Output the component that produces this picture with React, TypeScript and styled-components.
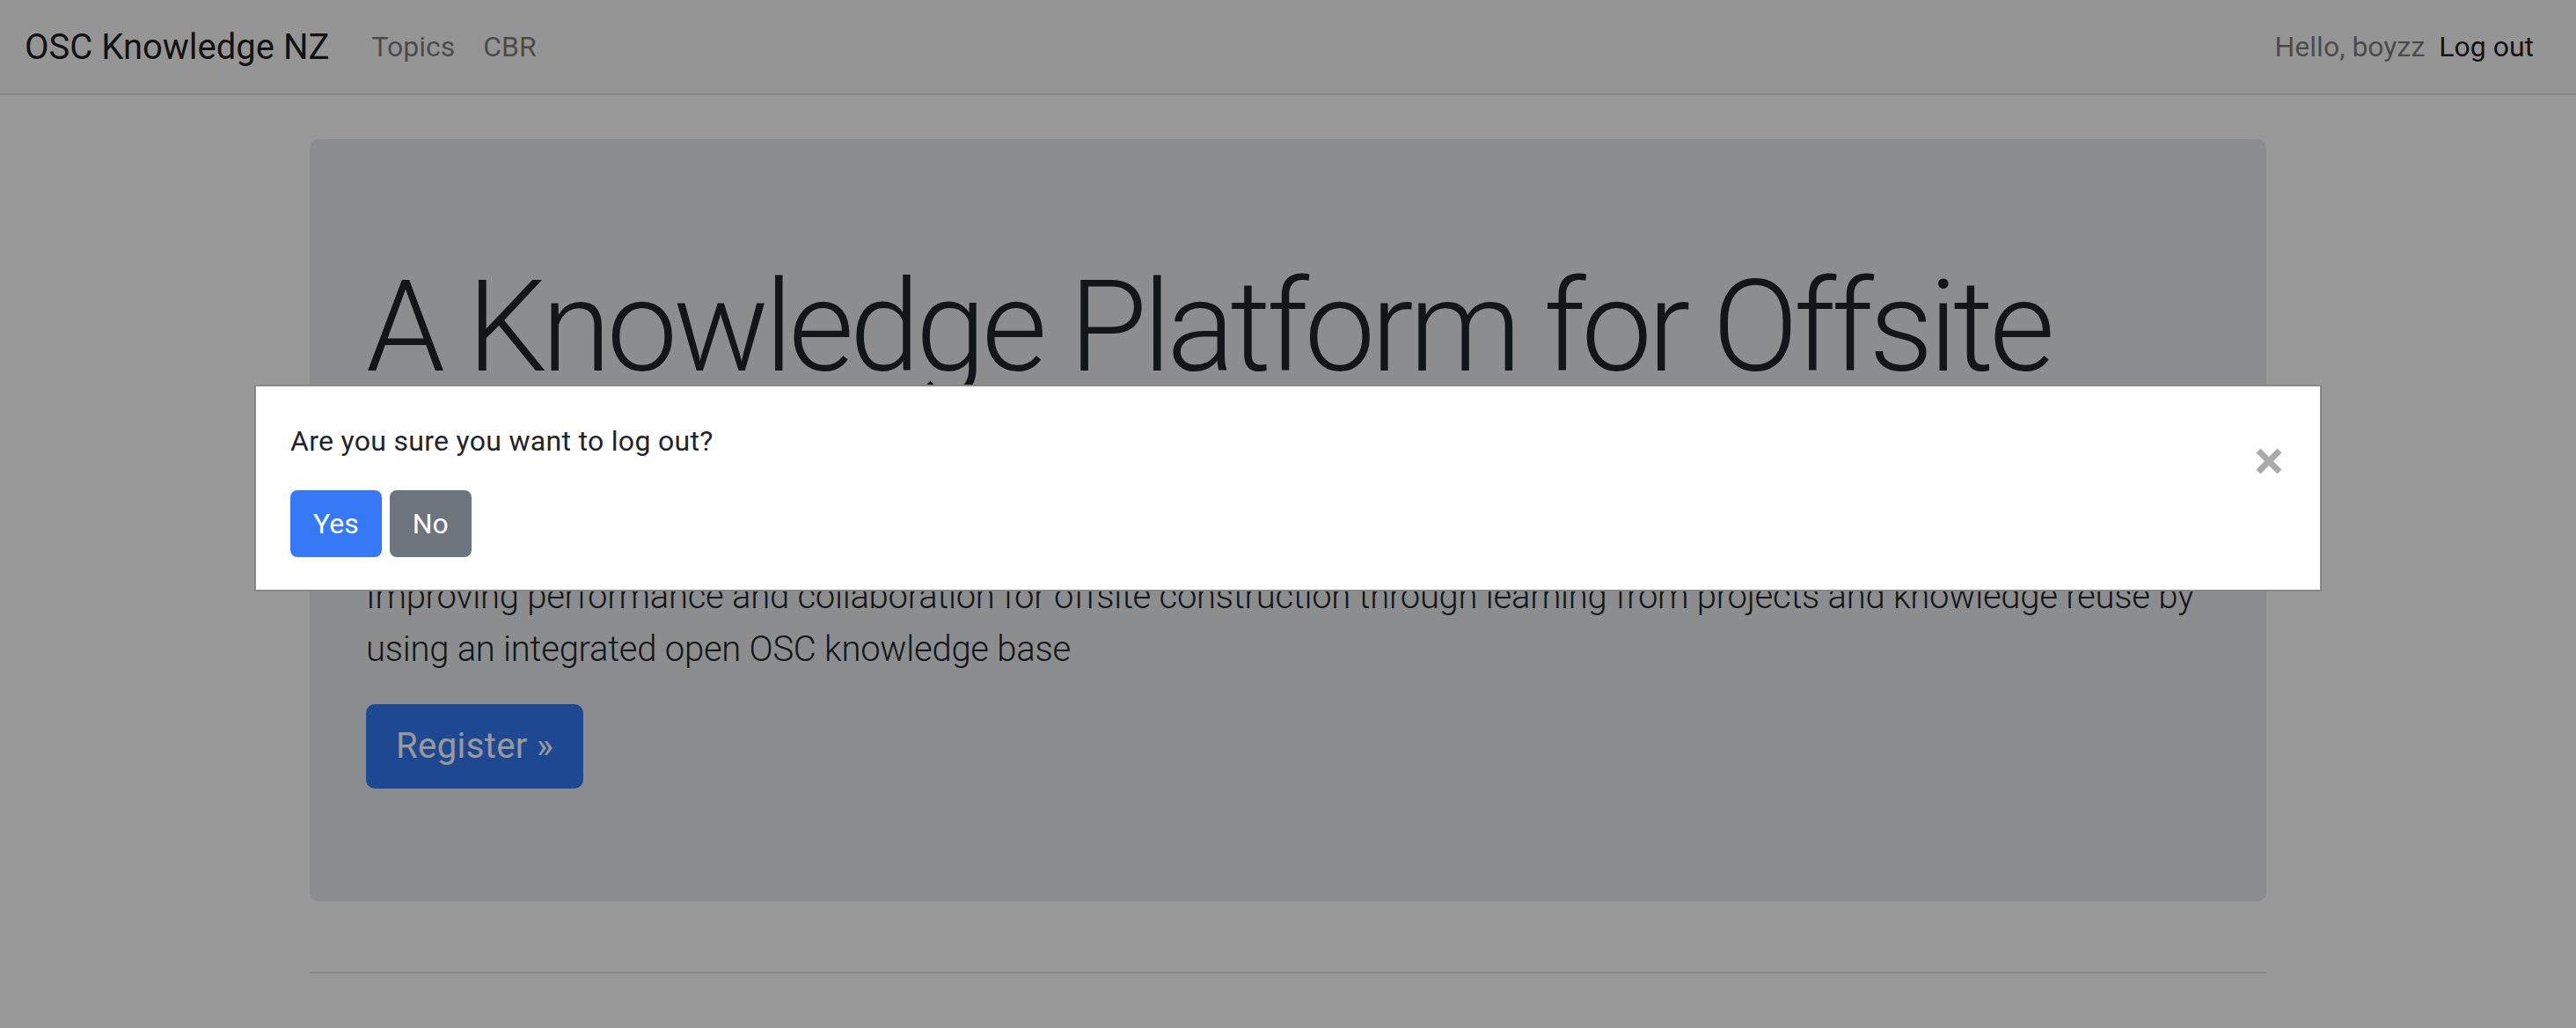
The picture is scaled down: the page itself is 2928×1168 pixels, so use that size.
import styled, { createGlobalStyle } from 'styled-components';

const GlobalStyle = createGlobalStyle`
  html, body {
    margin: 0;
    padding: 0;
    background: #fff;
    font-family: Roboto, 'Liberation Sans', sans-serif;
    color: #212529;
  }
  * {
    box-sizing: border-box;
  }
`;

const Navbar = styled.nav`
  display: flex;
  align-items: center;
  height: 108px;
  padding: 0 32px 0 28px;
  background: #f8f9fa;
  border-bottom: 2px solid #dee2e6;
`;
const Brand = styled.a`
  font-size: 40px;
  color: rgba(0, 0, 0, 0.9);
  text-decoration: none;
  margin-right: 32px;
`;
const NavList = styled.div`
  display: flex;
  align-items: center;
  flex: 1;
`;
const NavLink = styled.a<{ $strong?: boolean }>`
  font-size: 32px;
  padding: 0 16px;
  text-decoration: none;
  color: ${(p) => (p.$strong ? 'rgba(0, 0, 0, 0.9)' : 'rgba(0, 0, 0, 0.5)')};
`;
const NavText = styled.span`
  font-size: 32px;
  color: rgba(0, 0, 0, 0.5);
`;
const Right = styled.div`
  display: flex;
  align-items: center;
`;

const Main = styled.main`
  width: 2224px;
  margin: 0 auto;
  padding-top: 50px;
`;
const Jumbotron = styled.section`
  background: #e9ecef;
  border-radius: 10px;
  padding: 128px 64px;
`;
const Heading = styled.h1`
  margin: 0 0 16px;
  font-size: 144px;
  font-weight: 300;
  line-height: 1.2;
  letter-spacing: -5px;
`;
const Lead = styled.p`
  margin: 0 0 32px;
  font-size: 40px;
  font-weight: 300;
  line-height: 1.5;
  letter-spacing: -0.25px;
`;
const Button = styled.button<{ $variant: 'primary' | 'secondary'; $large?: boolean }>`
  appearance: none;
  border: 2px solid ${(p) => (p.$variant === 'primary' ? '#3579f6' : '#6c757d')};
  background: ${(p) => (p.$variant === 'primary' ? '#3579f6' : '#6c757d')};
  color: #fff;
  font-family: inherit;
  font-size: ${(p) => (p.$large ? '40px' : '32px')};
  letter-spacing: ${(p) => (p.$large ? '0.4px' : '0')};
  line-height: 1.5;
  padding: ${(p) => (p.$large ? '16px 32px' : '12px 24px')};
  border-radius: ${(p) => (p.$large ? '10px' : '8px')};
  cursor: pointer;
`;
const Rule = styled.hr`
  margin: 80px 0 0;
  border: 0;
  border-top: 2px solid rgba(0, 0, 0, 0.1);
`;

const Backdrop = styled.div`
  position: fixed;
  inset: 0;
  background: rgba(0, 0, 0, 0.4);
  display: flex;
  justify-content: center;
  align-items: flex-start;
  padding-top: 437px;
`;
const Dialog = styled.div`
  width: 2350px;
  background: #fff;
  border: 2px solid #888;
  padding: 38px 41px 37px 39px;
  display: flex;
  justify-content: space-between;
  align-items: flex-start;
`;
const DialogBody = styled.div`
  display: flex;
  flex-direction: column;
  gap: 32px;
`;
const Question = styled.p`
  margin: 0;
  font-size: 32px;
  line-height: 48px;
  letter-spacing: 0.3px;
  color: #212529;
`;
const Actions = styled.div`
  display: flex;
  gap: 9px;
`;
const Close = styled.button`
  appearance: none;
  border: 0;
  background: none;
  padding: 0;
  margin-top: 30px;
  width: 34px;
  height: 34px;
  display: flex;
  align-items: center;
  justify-content: center;
  cursor: pointer;
`;

export default function App() {
  return (
    <>
      <GlobalStyle />
      <Navbar>
        <NavList>
          <Brand href="#">OSC Knowledge NZ</Brand>
          <NavLink href="#">Topics</NavLink>
          <NavLink href="#">CBR</NavLink>
        </NavList>
        <Right>
          <NavText>Hello, boyzz</NavText>
          <NavLink href="#" $strong>
            Log out
          </NavLink>
        </Right>
      </Navbar>
      <Main>
        <Jumbotron>
          <Heading>A Knowledge Platform for Offsite Construction</Heading>
          <Lead>
            Improving performance and collaboration for offsite construction through learning from
            projects and knowledge reuse by using an integrated open OSC knowledge base
          </Lead>
          <Button $variant="primary" $large>
            Register &raquo;
          </Button>
        </Jumbotron>
        <Rule />
      </Main>
      <Backdrop>
        <Dialog>
          <DialogBody>
            <Question>Are you sure you want to log out?</Question>
            <Actions>
              <Button $variant="primary">Yes</Button>
              <Button $variant="secondary">No</Button>
            </Actions>
          </DialogBody>
          <Close aria-label="Close">
            <svg width="32" height="32" viewBox="0 0 32 32">
              <path d="M4 4 L28 28 M28 4 L4 28" stroke="#aaa" strokeWidth="7" />
            </svg>
          </Close>
        </Dialog>
      </Backdrop>
    </>
  );
}
